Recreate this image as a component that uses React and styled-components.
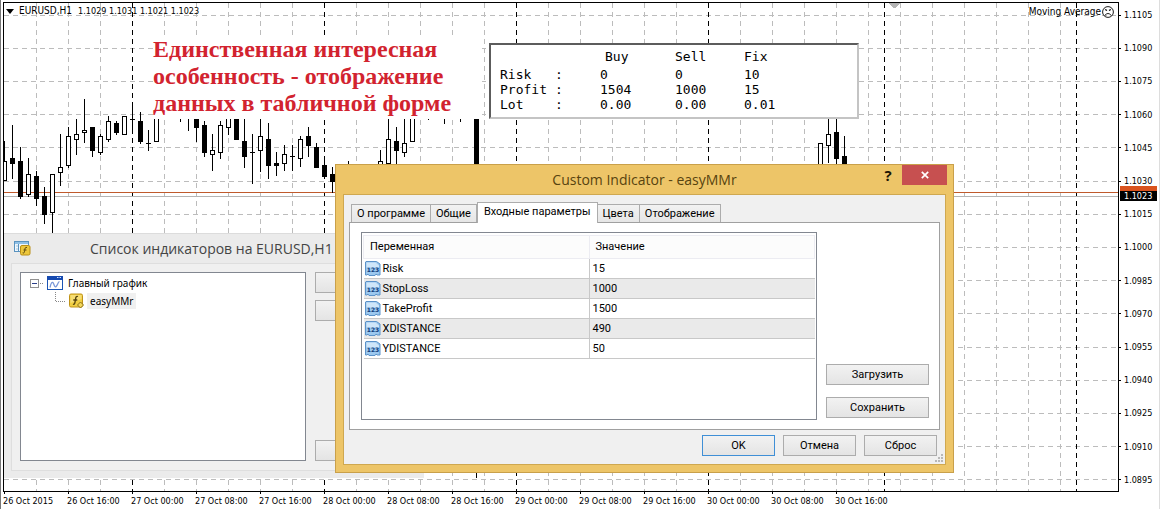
import React from 'react';
import styled, { createGlobalStyle } from 'styled-components';

const axisFont = "'DejaVu Sans Condensed', 'DejaVu Sans', sans-serif";
const titleFont = "'Open Sans', 'Noto Sans', sans-serif";
const dialogFont = 'Roboto, sans-serif';

const GlobalStyle = createGlobalStyle`
  * {
    box-sizing: border-box;
  }
  body {
    margin: 0;
    background: #fff;
    color: #000;
  }
  button {
    margin: 0;
    padding: 0;
    font: inherit;
    color: inherit;
  }
`;

/* ---------- chart ---------- */

const Desktop = styled.main`
  position: relative;
  display: grid;
  grid-template-columns: 1fr 38px;
  grid-template-rows: 1fr 17px;
  min-height: 100vh;
  padding: 2px 2px 0;
  overflow: hidden;
  border-left: 1px solid #777;
  border-right: 1px solid #ddd;
  font-family: ${axisFont};
  font-size: 9px;
`;

const Plot = styled.section`
  position: relative;
  min-width: 0;
  border: 1px solid #000;
`;

const PlotDrawing = styled.svg`
  position: absolute;
  inset: 0;
  width: 100%;
  height: 100%;
`;

const Quote = styled.div`
  position: absolute;
  top: 1px;
  left: 2px;
  display: flex;
  align-items: center;
  gap: 6px;
  line-height: 14px;
  white-space: pre;
  svg {
    margin-right: -1px;
  }
`;

const QuoteSymbol = styled.span`
  font-size: 10px;
`;

const Expert = styled.div`
  position: absolute;
  top: 2px;
  right: 4px;
  display: flex;
  align-items: center;
  gap: 1px;
  font-size: 10px;
  line-height: 14px;
`;

const PriceAxis = styled.div`
  position: relative;
  display: flex;
  flex-direction: column;
  justify-content: space-between;
  padding: 6px 0 5px;
  line-height: 14px;
`;

const Price = styled.span`
  display: flex;
  align-items: center;
  gap: 3px;
  &::before {
    content: '';
    width: 2px;
    height: 1px;
    background: #000;
  }
`;

const PriceBadge = styled.div`
  position: absolute;
  top: 184px;
  left: 1px;
  right: 0;
  padding-left: 4px;
  border-top: 5px solid #d9531e;
  background: #000;
  color: #fff;
  line-height: 10px;
`;

const TimeAxis = styled.div`
  display: flex;
  grid-column: 1 / -1;
  line-height: 14px;
  white-space: nowrap;
`;

const Time = styled.span`
  flex: 0 0 64px;
  &::before {
    content: '';
    display: block;
    width: 1px;
    height: 2px;
    margin-left: 1px;
    background: #000;
  }
`;

const Note = styled.p`
  position: absolute;
  top: 35px;
  left: 152px;
  width: 329px;
  height: 84px;
  margin: 0;
  padding-top: 1px;
  background: #fff;
  color: #d2232f;
  font: bold 24px/27px 'Liberation Serif', serif;
  white-space: pre-line;
`;

const Summary = styled.table`
  position: absolute;
  top: 43px;
  left: 488px;
  width: 370px;
  height: 75px;
  padding: 4px 0 5px 9px;
  border: 2px solid #c4c4c4;
  border-top-color: #5c5c5c;
  border-left-color: #5c5c5c;
  border-spacing: 0;
  background: #fff;
  font: 13px/15px 'DejaVu Sans Mono', monospace;
  table-layout: fixed;
  th,
  td {
    padding: 0;
    font-weight: 400;
    text-align: left;
    white-space: nowrap;
  }
  thead th {
    padding-bottom: 3px;
  }
  thead th:nth-child(3) {
    padding-left: 5px;
  }
`;

const gridRows = [15, 48, 81, 114, 147, 181, 214, 247, 280, 313, 347, 380, 413, 446, 479];
const gridCols = Array.from({ length: 33 }, (_, i) => 36 + i * 32);
const sessions = [132, 324, 516, 708, 884, 1076];

// x, high, body top, body bottom, low, filled
const candles = [
  [4, 141, 161, 181, 181, 0],
  [12, 125, 158, 164, 179, 1],
  [20, 147, 161, 197, 199, 1],
  [28, 158, 174, 195, 197, 0],
  [36, 171, 176, 199, 206, 1],
  [44, 187, 196, 215, 224, 1],
  [52, 174, 174, 213, 233, 0],
  [60, 134, 167, 173, 186, 0],
  [68, 127, 136, 166, 168, 0],
  [76, 119, 134, 140, 155, 0],
  [84, 99, 130, 133, 143, 0],
  [92, 127, 127, 151, 157, 1],
  [100, 134, 136, 153, 155, 0],
  [108, 116, 121, 140, 142, 0],
  [116, 121, 123, 133, 135, 1],
  [124, 116, 116, 135, 135, 0],
  [132, 106, 119, 120, 131, 1],
  [140, 112, 121, 142, 144, 1],
  [148, 130, 143, 144, 151, 1],
  [156, 100, 110, 142, 142, 0],
  [180, 100, 110, 111, 122, 1],
  [188, 100, 110, 111, 131, 1],
  [196, 110, 112, 128, 142, 1],
  [204, 121, 125, 153, 157, 1],
  [212, 134, 150, 155, 171, 0],
  [220, 121, 125, 153, 159, 0],
  [228, 110, 110, 128, 135, 0],
  [236, 110, 110, 140, 140, 1],
  [244, 110, 141, 157, 168, 1],
  [252, 134, 152, 153, 184, 1],
  [260, 110, 136, 151, 172, 0],
  [268, 123, 139, 166, 179, 1],
  [276, 152, 163, 166, 176, 1],
  [284, 145, 154, 164, 171, 0],
  [292, 145, 156, 157, 171, 1],
  [300, 136, 139, 159, 167, 0],
  [308, 127, 136, 146, 157, 1],
  [316, 143, 147, 168, 168, 1],
  [324, 157, 165, 177, 177, 1],
  [332, 167, 174, 182, 193, 1],
  [348, 161, 166, 180, 180, 0],
  [380, 150, 161, 180, 180, 0],
  [388, 110, 139, 164, 180, 0],
  [396, 127, 141, 151, 164, 1],
  [404, 110, 143, 153, 157, 0],
  [412, 100, 110, 142, 142, 0],
  [428, 100, 110, 111, 120, 1],
  [444, 100, 110, 111, 124, 1],
  [460, 100, 110, 111, 122, 1],
  [476, 110, 112, 400, 478, 1],
  [820, 143, 143, 190, 190, 0],
  [828, 90, 134, 146, 163, 0],
  [836, 92, 132, 159, 170, 1],
  [844, 136, 156, 180, 190, 1],
];

const prices = [
  '1.1105', '1.1090', '1.1075', '1.1060', '1.1045', '1.1030', '1.1015', '1.1000',
  '1.0985', '1.0970', '1.0955', '1.0940', '1.0925', '1.0910', '1.0895',
];

const times = [
  '26 Oct 2015', '26 Oct 16:00', '27 Oct 00:00', '27 Oct 08:00', '27 Oct 16:00',
  '28 Oct 00:00', '28 Oct 08:00', '28 Oct 16:00', '29 Oct 00:00', '29 Oct 08:00',
  '29 Oct 16:00', '30 Oct 00:00', '30 Oct 08:00', '30 Oct 16:00',
];

const Candle = ({ x, high, top, bottom, low, filled }) => (
  <g shapeRendering="crispEdges">
    <rect x={x} y={high} width="1" height={low - high} />
    {filled ? (
      <rect x={x - 2} y={top} width="5" height={bottom - top} />
    ) : (
      <rect x={x - 2 + 0.5} y={top + 0.5} width="4" height={bottom - top - 1} fill="#fff" stroke="#000" />
    )}
  </g>
);

const Chart = () => (
  <PlotDrawing aria-hidden="true">
    <g transform="translate(-4 -3)" shapeRendering="crispEdges">
      <g stroke="#bcbcbc" strokeDasharray="5 4">
        {gridRows.map(y => (
          <line key={y} x1="4" x2="2000" y1={y + 0.5} y2={y + 0.5} />
        ))}
        {gridCols.map(x => (
          <line key={x} x1={x + 0.5} x2={x + 0.5} y1="3" y2="1200" />
        ))}
      </g>
      <g stroke="#000" strokeDasharray="5 4">
        {sessions.map(x => (
          <line key={x} x1={x + 0.5} x2={x + 0.5} y1="3" y2="1200" />
        ))}
      </g>
      <rect x="4" y="192" width="2000" height="1" fill="#c05a2c" />
      <rect x="4" y="196" width="2000" height="1" fill="#b4b4b4" />
      {candles.map(([x, high, top, bottom, low, filled]) => (
        <Candle key={x} x={x} high={high} top={top} bottom={bottom} low={low} filled={filled} />
      ))}
      <path d="M888 3h12l-5 5h-2z" fill="#b4b4b4" />
    </g>
  </PlotDrawing>
);

const SadFace = () => (
  <svg width="12" height="12" viewBox="0 0 12 12" fill="none" stroke="#000" aria-hidden="true">
    <circle cx="6" cy="6" r="5.4" strokeWidth="0.9" />
    <path d="M3 9.2q3-3.4 6 0" strokeWidth="0.9" />
    <path d="M3.2 3.4l1.8 1.2M8.8 3.4L7 4.600" strokeWidth="1.2" />
  </svg>
);

/* ---------- windows ---------- */

const ListWindow = styled.section`
  position: absolute;
  top: 233px;
  left: 3px;
  width: 420px;
  padding: 0 8px 7px 7px;
  background: #ebebeb;
  border-top: 1px solid #dcdcdc;
`;

const ListTitle = styled.header`
  display: flex;
  align-items: center;
  gap: 59px;
  height: 29px;
  padding-left: 3px;
  font: 14px/28px ${titleFont};
  color: #444;
  white-space: nowrap;
`;

const ListClient = styled.div`
  display: flex;
  gap: 9px;
  height: 208px;
  padding: 8px 8px 9px;
  border: 1px solid #dedede;
  background: #f0f0f0;
`;

const Tree = styled.ul`
  flex: none;
  width: 286px;
  margin: 0;
  padding: 1px 0 0 9px;
  border: 1px solid #828790;
  background: #fff;
  list-style: none;
  font: 10px/18px 'Noto Sans', sans-serif;
`;

const TreeItem = styled.li`
  display: flex;
  align-items: center;
  height: 18px;
  padding-left: ${props => (props.$nested ? '25px' : '0')};
  svg {
    flex: none;
    margin-right: 2px;
  }
  svg:first-child {
    margin-right: 3px;
  }
  span {
    padding: 0 3px;
    line-height: 16px;
    background: ${props => (props.$nested ? '#f0f0f0' : 'none')};
  }
`;

const ListActions = styled.div`
  display: flex;
  flex: 1;
  flex-direction: column;
  gap: 7px;
  button:last-child {
    margin-top: auto;
  }
`;

const Button = styled.button`
  width: ${props => (props.$wide ? '103px' : '73px')};
  height: 21px;
  border: 1px solid ${props => (props.$primary ? '#3f8fd6' : '#acacac')};
  background: linear-gradient(#f2f2f2, #e4e4e4);
  line-height: 19px;
`;

const Dialog = styled.section`
  position: absolute;
  top: 164px;
  left: 334px;
  width: 619px;
  padding: 0 7px 7px;
  border: 1px solid #c9a04a;
  background: #edc568;
  font: 11px/16px ${dialogFont};
`;

const DialogTitle = styled.header`
  position: relative;
  height: 29px;
  font: 14px/30px ${titleFont};
  color: #57430f;
  text-align: center;
`;

const WindowControls = styled.div`
  position: absolute;
  top: 0;
  right: -1px;
  display: flex;
  gap: 2px;
  line-height: 20px;
`;

const HelpButton = styled.button`
  width: 24px;
  height: 20px;
  border: 0;
  background: none;
  color: #1c1505;
  font: bold 15px/20px ${titleFont};
`;

const CloseButton = styled.button`
  display: flex;
  align-items: center;
  justify-content: center;
  width: 45px;
  height: 20px;
  border: 0;
  background: #c75050;
`;

const DialogClient = styled.div`
  position: relative;
  height: 271px;
  padding: 7px 5px 8px;
  border: 1px solid #cfa850;
  background: #f0f0f0;
`;

const Tabs = styled.nav`
  display: flex;
  align-items: flex-end;
  height: 20px;
  padding-left: 2px;
`;

const Tab = styled.button`
  position: relative;
  height: ${props => (props.$active ? '21px' : '18px')};
  margin-bottom: ${props => (props.$active ? '-1px' : '0')};
  padding: ${props => (props.$active ? '0 6px 3px' : '0 5px')};
  border: 1px solid #acacac;
  border-left-width: ${props => (props.$first || props.$active ? '1px' : '0')};
  border-bottom: 0;
  background: ${props => (props.$active ? '#fff' : 'linear-gradient(#f2f2f2, #e6e6e6)')};
  white-space: nowrap;
`;

const Panel = styled.div`
  display: flex;
  gap: 9px;
  height: 208px;
  padding: 9px 10px 9px 11px;
  border: 1px solid #a0a0a0;
  background: #fff;
`;

const ParamsFrame = styled.div`
  flex: 1;
  padding: 2px 1px;
  border: 1px solid #828790;
`;

const Params = styled.table`
  width: 100%;
  border-collapse: collapse;
  table-layout: fixed;
  th,
  td {
    padding: 0 0 0 3px;
    text-align: left;
    font-weight: 400;
  }
  th {
    height: 23px;
    padding-left: 6px;
    border: 1px solid #ececf2;
    background: #fcfcfc;
  }
  td {
    height: 20px;
    border-bottom: 1px solid #c8c8c8;
  }
  td + td {
    border-left: 1px solid #c8c8c8;
  }
  tbody tr:nth-child(even) {
    background: #eaeaea;
  }
`;

const ParamName = styled.div`
  display: flex;
  align-items: center;
  gap: 2px;
  height: 19px;
  margin-left: -2px;
`;

const PanelActions = styled.div`
  display: flex;
  flex-direction: column;
  justify-content: flex-end;
  gap: 12px;
  padding-bottom: 2px;
`;

const DialogActions = styled.footer`
  display: flex;
  justify-content: flex-end;
  gap: 8px;
  padding: 5px 3px 0 0;
`;

const Grip = styled.svg`
  position: absolute;
  right: 2px;
  bottom: 2px;
`;

const ListIcon = () => (
  <svg width="17" height="15" viewBox="0 0 17 15" aria-hidden="true">
    <rect x="0.5" y="0.5" width="14" height="10" fill="#eef6fc" stroke="#5a93bf" />
    <path d="M1 1h13v2H1z" fill="#8fc0e6" />
    <path d="M4.5 3v7M2.5 5h1M2.5 8h1" stroke="#5a93bf" />
    <rect x="6.5" y="4.5" width="9.5" height="9.5" rx="1.5" fill="#edc73c" stroke="#b98e16" />
    <path d="M13 6.5c-2-.8-2 1-2.3 3s-.6 3-2 2.300M9.500 9h3" fill="none" stroke="#5e4a10" />
  </svg>
);

const ChartIcon = () => (
  <svg width="16" height="14" viewBox="0 0 16 14" aria-hidden="true">
    <rect x="0.5" y="0.5" width="15" height="13" fill="#fff" stroke="#1b55b5" />
    <path d="M0 0h16v4H0z" fill="#1549b0" />
    <path d="M10 1.500h1.500M12.500 1.500H14" stroke="#cfe0ff" />
    <path d="M3 11.500c1-5 2.500-6.500 3.500-4s1.500 4.500 3 2.500 1.500-4 3-4.500" fill="none" stroke="#7a98d8" strokeWidth="1.3" />
  </svg>
);

const IndicatorIcon = () => (
  <svg width="16" height="16" viewBox="0 0 16 16" aria-hidden="true">
    <rect x="0.5" y="1" width="13" height="13" rx="1.5" fill="#f0ce42" stroke="#bf9218" />
    <path d="M1.500 2h11v4l-11 4z" fill="#f8e48a" opacity=".7" />
    <path d="M9 3.500c-2-.8-2.200 1-2.600 3.500S5.700 12 4 11M4.300 7h4" fill="none" stroke="#54430d" strokeWidth="1.3" />
    <path d="M11.500 9l3 3-3 3-3-3z" fill="#f3d75c" stroke="#8d7117" />
  </svg>
);

const NumberIcon = () => (
  <svg width="16" height="15" viewBox="0 0 16 15" aria-hidden="true">
    <path d="M1 .5h10.500L15 3v11H12l-1-1-1 1.500H4L3 13l-1 1H.5V1z" fill="#9cc8ee" stroke="#5b92c9" />
    <path d="M1.500 1.500h9l3.500 3v2H1.500z" fill="#cfe6f9" />
    <text x="8" y="11" textAnchor="middle" fontFamily="'DejaVu Sans', sans-serif" fontSize="6" fontWeight="700" fill="#0d3c7c">
      123
    </text>
  </svg>
);

const Branch = ({ nested }) =>
  nested ? (
    <svg width="11" height="18" viewBox="0 0 11 18" stroke="#888" strokeDasharray="1 1" aria-hidden="true">
      <path d="M.5 0v9.500H11" fill="none" />
    </svg>
  ) : (
    <svg width="14" height="9" viewBox="0 0 14 9" aria-hidden="true">
      <rect x="0.5" y="0.5" width="8" height="8" fill="#fff" stroke="#919191" />
      <path d="M2 4.500h5" stroke="#2b3f8a" />
      <path d="M10 4.500h4" stroke="#888" strokeDasharray="1 1" />
    </svg>
  );

const tabs = ['О программе', 'Общие', 'Входные параметры', 'Цвета', 'Отображение'];

const params = [
  ['Risk', '15'],
  ['StopLoss', '1000'],
  ['TakeProfit', '1500'],
  ['XDISTANCE', '490'],
  ['YDISTANCE', '50'],
];

const summary = [
  ['Risk', '0', '0', '10'],
  ['Profit', '1504', '1000', '15'],
  ['Lot', '0.00', '0.00', '0.01'],
];

const IndicatorList = () => (
  <ListWindow>
    <ListTitle>
      <ListIcon />
      Список индикаторов на EURUSD,H1
    </ListTitle>
    <ListClient>
      <Tree>
        <TreeItem>
          <Branch />
          <ChartIcon />
          <span>Главный график</span>
        </TreeItem>
        <TreeItem $nested>
          <Branch nested />
          <IndicatorIcon />
          <span>easyMMr</span>
        </TreeItem>
      </Tree>
      <ListActions>
        <Button $wide aria-label="Свойства" />
        <Button $wide aria-label="Удалить" />
        <Button $wide aria-label="Закрыть" />
      </ListActions>
    </ListClient>
  </ListWindow>
);

const IndicatorDialog = () => (
  <Dialog role="dialog" aria-label="Custom Indicator - easyMMr">
    <DialogTitle>
      Custom Indicator - easyMMr
      <WindowControls>
        <HelpButton>?</HelpButton>
        <CloseButton aria-label="Закрыть">
          <svg width="8" height="8" viewBox="0 0 8 8" aria-hidden="true">
            <path d="M.8.8l6.400 6.400M7.200.8L.8 7.200" stroke="#fff" strokeWidth="1.700" />
          </svg>
        </CloseButton>
      </WindowControls>
    </DialogTitle>
    <DialogClient>
      <Tabs>
        {tabs.map((tab, i) => (
          <Tab key={tab} $first={i === 0} $active={i === 2}>
            {tab}
          </Tab>
        ))}
      </Tabs>
      <Panel>
        <ParamsFrame>
          <Params>
            <thead>
              <tr>
                <th>Переменная</th>
                <th>Значение</th>
              </tr>
            </thead>
            <tbody>
              {params.map(([name, value]) => (
                <tr key={name}>
                  <td>
                    <ParamName>
                      <NumberIcon />
                      {name}
                    </ParamName>
                  </td>
                  <td>{value}</td>
                </tr>
              ))}
            </tbody>
          </Params>
        </ParamsFrame>
        <PanelActions>
          <Button $wide>Загрузить</Button>
          <Button $wide>Сохранить</Button>
        </PanelActions>
      </Panel>
      <DialogActions>
        <Button $primary>OK</Button>
        <Button>Отмена</Button>
        <Button>Сброс</Button>
      </DialogActions>
      <Grip width="8" height="8" viewBox="0 0 8 8" fill="#b8b8b8" aria-hidden="true">
        <path d="M6 0h2v2H6zM3 3h2v2H3zM6 3h2v2H6zM0 6h2v2H0zM3 6h2v2H3zM6 6h2v2H6z" />
      </Grip>
    </DialogClient>
  </Dialog>
);

const App = () => (
  <>
    <GlobalStyle />
    <Desktop>
      <Plot>
        <Chart />
        <Quote>
          <svg width="8" height="5" viewBox="0 0 8 5" aria-hidden="true">
            <path d="M0 0h8L4 5z" />
          </svg>
          <QuoteSymbol>EURUSD,H1</QuoteSymbol>
          <span>1.1029 1.1031 1.1021 1.1023</span>
        </Quote>
        <Expert>
          Moving Average
          <SadFace />
        </Expert>
      </Plot>
      <PriceAxis>
        {prices.map(price => (
          <Price key={price}>{price}</Price>
        ))}
        <PriceBadge>1.1023</PriceBadge>
      </PriceAxis>
      <TimeAxis>
        {times.map(time => (
          <Time key={time}>{time}</Time>
        ))}
      </TimeAxis>
      <Note>{'Единственная интересная\nособенность - отображение\nданных в табличной форме'}</Note>
      <Summary>
        <colgroup>
          <col width="55" />
          <col width="45" />
          <col width="75" />
          <col width="69" />
          <col />
        </colgroup>
        <thead>
          <tr>
            <th />
            <th />
            <th>Buy</th>
            <th>Sell</th>
            <th>Fix</th>
          </tr>
        </thead>
        <tbody>
          {summary.map(([label, buy, sell, fix]) => (
            <tr key={label}>
              <th>{label}</th>
              <td>:</td>
              <td>{buy}</td>
              <td>{sell}</td>
              <td>{fix}</td>
            </tr>
          ))}
        </tbody>
      </Summary>
      <IndicatorList />
      <IndicatorDialog />
    </Desktop>
  </>
);

export default App;
